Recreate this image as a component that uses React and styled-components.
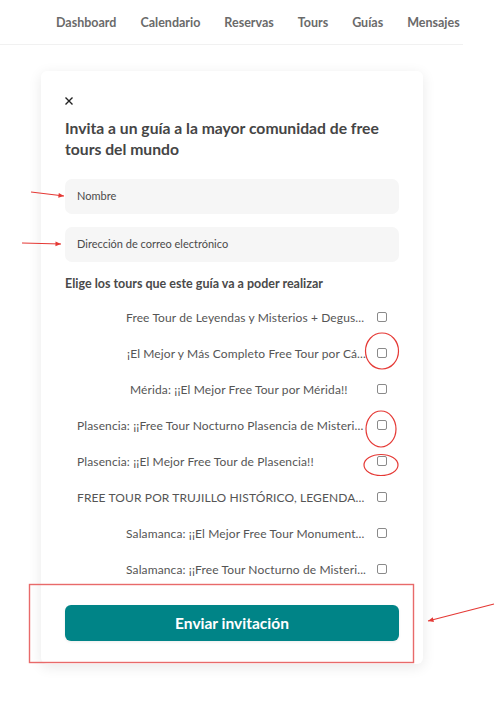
import styled, { createGlobalStyle } from "styled-components";

const Global = createGlobalStyle`
  body {
    margin: 0;
    background: #fff;
    font-family: Lato, "Noto Sans", sans-serif;
  }
`;

const Page = styled.div`
  position: relative;
  width: 495px;
  min-height: 702px;
`;

const Nav = styled.nav`
  width: 463px;
  height: 45px;
  box-sizing: border-box;
  padding-left: 56px;
  display: flex;
  align-items: center;
  gap: 24px;
  border-bottom: 1px solid #f1f1f1;
`;

const NavItem = styled.a`
  font-size: 12.5px;
  font-weight: 700;
  color: #6a6a6a;
  text-decoration: none;
`;

const Card = styled.div`
  margin: 26px 0 0 41px;
  width: 382px;
  box-sizing: border-box;
  padding: 22px 24px 23px;
  background: #fff;
  border-radius: 6px;
  box-shadow: 0 3px 14px rgba(0, 0, 0, 0.09);
`;

const Close = styled.button`
  display: block;
  border: none;
  background: none;
  padding: 0;
  width: 8px;
  height: 10px;
  cursor: pointer;
`;

const Title = styled.h2`
  margin: 15px 0 0;
  font-size: 15.7px;
  line-height: 21px;
  font-weight: 700;
  color: #454545;
`;

const Input = styled.input`
  display: block;
  width: 100%;
  height: 35px;
  box-sizing: border-box;
  margin-top: ${(p) => p.$top}px;
  padding: 0 12px 3px;
  border: none;
  border-radius: 7px;
  background: #f6f6f6;
  font-family: inherit;
  font-size: 11px;
  outline: none;
  &::placeholder {
    color: #4a4a4a;
  }
`;

const Label = styled.div`
  margin-top: 14px;
  font-size: 12.5px;
  line-height: 16px;
  font-weight: 700;
  color: #4a4a4a;
`;

const List = styled.ul`
  list-style: none;
  margin: 7px 0 0;
  padding: 0;
`;

const Row = styled.li`
  height: 36px;
  display: flex;
  align-items: center;
  padding-left: 12px;
`;

const Thumb = styled.span`
  flex: none;
  width: ${(p) => p.$w}px;
`;

const TourName = styled.span`
  flex: 1;
  min-width: 0;
  white-space: nowrap;
  font-size: 12px;
  letter-spacing: 0.12px;
  color: #555;
`;

const Check = styled.input`
  appearance: none;
  flex: none;
  width: 10px;
  height: 10px;
  margin: 0 12px 0 12px;
  border: 1px solid #8a8a8a;
  border-radius: 2px;
  background: #fff;
`;

const Submit = styled.button`
  display: block;
  width: 100%;
  height: 36px;
  margin-top: 18px;
  border: none;
  border-radius: 6px;
  background: #008487;
  color: #fff;
  font-family: inherit;
  font-size: 15.5px;
  font-weight: 700;
  box-shadow: 0 1px 3px rgba(0, 0, 0, 0.08);
`;

const Marks = styled.svg`
  position: absolute;
  left: 0;
  top: 0;
  pointer-events: none;
`;

const tours = [
  { name: "Free Tour de Leyendas y Misterios + Degus...", thumb: 49 },
  { name: "¡El Mejor y Más Completo Free Tour por Cá...", thumb: 50 },
  { name: "Mérida: ¡¡El Mejor Free Tour por Mérida!!", thumb: 53 },
  { name: "Plasencia: ¡¡Free Tour Nocturno Plasencia de Misteri...", thumb: 0 },
  { name: "Plasencia: ¡¡El Mejor Free Tour de Plasencia!!", thumb: 0 },
  { name: "FREE TOUR POR TRUJILLO HISTÓRICO, LEGENDA...", thumb: 0 },
  { name: "Salamanca: ¡¡El Mejor Free Tour Monument...", thumb: 49 },
  { name: "Salamanca: ¡¡Free Tour Nocturno de Misteri...", thumb: 49 },
];

const links = ["Dashboard", "Calendario", "Reservas", "Tours", "Guías", "Mensajes"];

function Arrow({ x1, y1, x2, y2 }) {
  const a = Math.atan2(y2 - y1, x2 - x1);
  const l = 6;
  const p1 = [x2 - l * Math.cos(a - 0.4), y2 - l * Math.sin(a - 0.4)];
  const p2 = [x2 - l * Math.cos(a + 0.4), y2 - l * Math.sin(a + 0.4)];
  return (
    <g>
      <line x1={x1} y1={y1} x2={x2} y2={y2} stroke="#e53935" strokeWidth="1.2" />
      <polygon points={`${x2},${y2} ${p1.join(",")} ${p2.join(",")}`} fill="#e53935" />
    </g>
  );
}

export default function App() {
  return (
    <Page>
      <Global />
      <Nav>
        {links.map((l) => (
          <NavItem key={l}>{l}</NavItem>
        ))}
      </Nav>
      <Card>
        <Close aria-label="Cerrar">
          <svg width="8" height="8" viewBox="0 0 8 8">
            <path d="M0.5 0.5L7.5 7.5M7.5 0.5L0.5 7.5" stroke="#222" strokeWidth="1.4" />
          </svg>
        </Close>
        <Title>Invita a un guía a la mayor comunidad de free tours del mundo</Title>
        <Input $top={19} placeholder="Nombre" />
        <Input $top={13} placeholder="Dirección de correo electrónico" />
        <Label>Elige los tours que este guía va a poder realizar</Label>
        <List>
          {tours.map((t) => (
            <Row key={t.name}>
              <Thumb $w={t.thumb} />
              <TourName>{t.name}</TourName>
              <Check type="checkbox" />
            </Row>
          ))}
        </List>
        <Submit>Enviar invitación</Submit>
      </Card>
      <Marks width="495" height="702">
        <Arrow x1={31} y1={192} x2={64} y2={196} />
        <Arrow x1={22} y1={243} x2={61} y2={244} />
        <Arrow x1={494} y1={604} x2={428} y2={621} />
        <ellipse cx="382" cy="351" rx="16.5" ry="18" fill="none" stroke="#e53935" strokeWidth="1.2" />
        <ellipse cx="381" cy="429" rx="15" ry="18" fill="none" stroke="#e53935" strokeWidth="1.2" />
        <ellipse cx="381" cy="465" rx="17" ry="10.5" fill="none" stroke="#e53935" strokeWidth="1.2" />
        <rect x="29.5" y="584.5" width="384" height="78" fill="none" stroke="#e86a6a" strokeWidth="1.4" />
      </Marks>
    </Page>
  );
}
